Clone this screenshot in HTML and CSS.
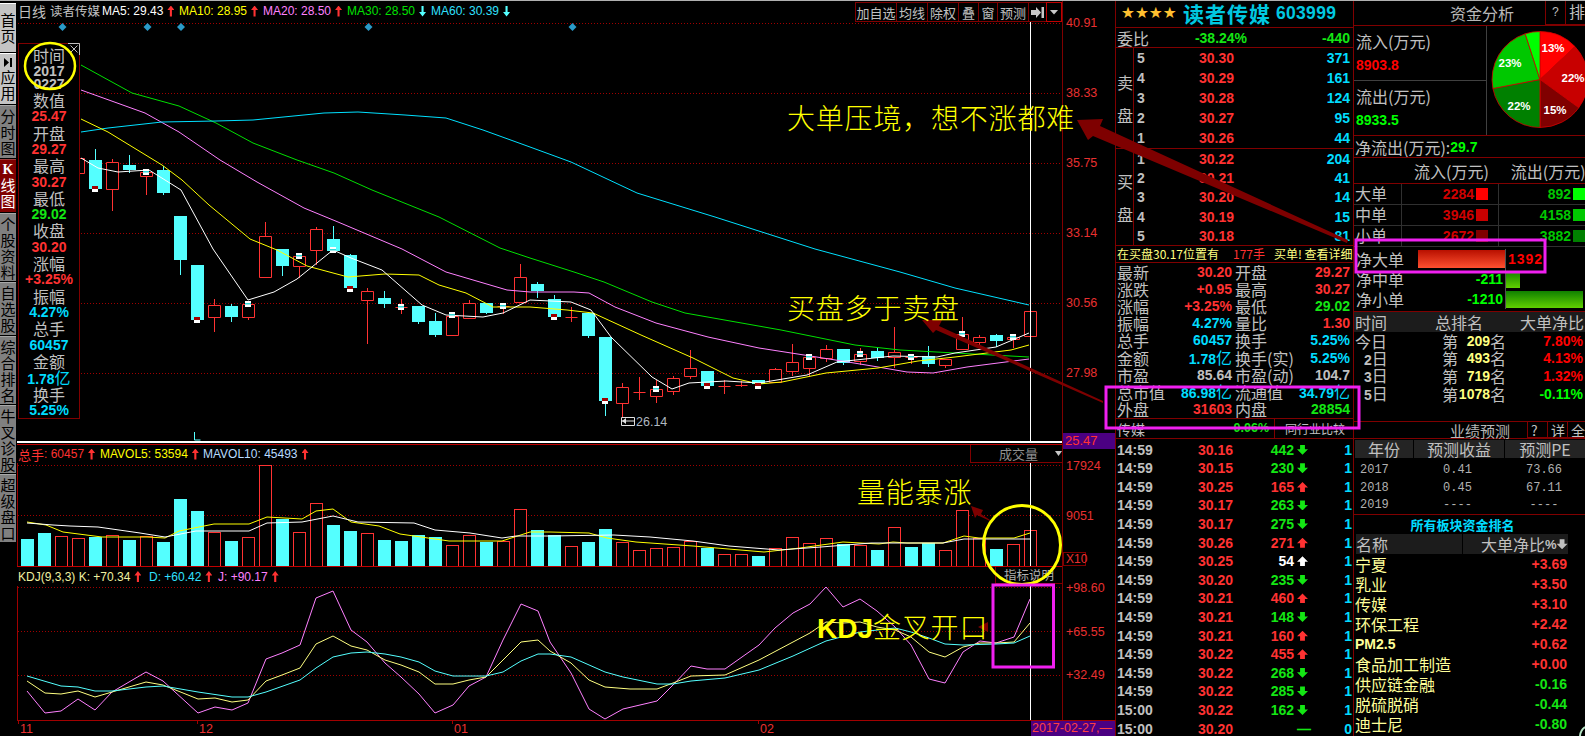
FILE: index.html
```html
<!DOCTYPE html>
<html lang="zh">
<head>
<meta charset="utf-8">
<title>读者传媒 603999</title>
<link rel="stylesheet" href="styles.css">
</head>
<body>
<div class="screen">
  <nav class="tabs">
    <a class="tab h48 light"><span>首页</span></a>
    <a class="tab h50 light"><span><svg class="tab-icon" width="10" height="9" viewBox="0 0 10 9"><path d="M1 0l5 4.500-5 4.500zM7 0h2v9H7z"/></svg>应用</span></a>
    <a class="tab h53"><span>分时图</span></a>
    <a class="tab h53 active"><span><b>K</b>线图</span></a>
    <a class="tab h68"><span>个股资料</span></a>
    <a class="tab h53"><span>自选股</span></a>
    <a class="tab h68"><span>综合排名</span></a>
    <a class="tab h68"><span>牛叉诊股</span></a>
    <a class="tab h68"><span>超级盘口</span></a>
  </nav>

  <main class="chart">
    <section class="pane pane-price">
      <div class="plot">
        <header class="legend-row">
          <span class="gray lg-first">日线</span>
          <span class="gray lg-name">读者传媒</span>
          <span class="lg w77 white">MA5: 29.43<i class="arr up red-bg"></i></span>
          <span class="lg w84 yellow">MA10: 28.95<i class="arr up red-bg"></i></span>
          <span class="lg w84 pink">MA20: 28.50<i class="arr up red-bg"></i></span>
          <span class="lg w84 green-ma">MA30: 28.50<i class="arr down cyan-bg"></i></span>
          <span class="lg w84 cyan-ma">MA60: 30.39<i class="arr down cyan-bg"></i></span>
          <div class="toolbar">
            <button class="w41">加自选</button><button class="w31">均线</button><button class="w31">除权</button><button class="w20">叠</button><button class="w19">窗</button><button class="w31">预测</button><button class="w18"><svg width="13" height="11" viewBox="0 0 13 11"><path d="M0 3h5V0l5 5.500-5 5.500V8H0zM10.500 0H13v11h-2.500z" fill="#c8c8c8"/></svg></button><button class="w15 bright"><i class="caret"></i></button>
          </div>
        </header>
        <svg id="price" class="plot-svg" width="1045" height="419" viewBox="17 22 1045 419"></svg>
        <aside class="infobox">
          <svg class="infobox-x" width="12" height="12" viewBox="0 0 12 12"><path d="M0 .5h11.500V12M2.500 2.500l7 7M9.500 2.500l-7 7" fill="none" stroke="#c0c0c0"/></svg>
          <div class="gray">时间</div><div class="gray nb">2017</div><div class="gray nb tight">0227</div>
          <div class="gray">数值</div><div class="red nb">25.47</div>
          <div class="gray">开盘</div><div class="red nb">29.27</div>
          <div class="gray">最高</div><div class="red nb">30.27</div>
          <div class="gray">最低</div><div class="green nb">29.02</div>
          <div class="gray">收盘</div><div class="red nb">30.20</div>
          <div class="gray">涨幅</div><div class="red nb">+3.25%</div>
          <div class="gray">振幅</div><div class="cyan nb">4.27%</div>
          <div class="gray">总手</div><div class="cyan nb">60457</div>
          <div class="gray">金额</div><div class="cyan nb">1.78<span class="reg">亿</span></div>
          <div class="gray">换手</div><div class="cyan nb">5.25%</div>
        </aside>
      </div>
      <div class="axis axis-price">
        <div class="tick t70">40.91</div><div class="tick t70">38.33</div><div class="tick t70">35.75</div><div class="tick t70">33.14</div><div class="tick t70">30.56</div><div class="tick t70">27.98</div>
        <div class="tag-price">25.47</div>
      </div>
    </section>

    <section class="pane pane-vol">
      <div class="plot plot-top">
        <header class="legend-row short">
          <span class="lg w82 red"><span class="cjk13">总手</span>: 60457<i class="arr up red-bg"></i></span>
          <span class="lg w104 yellow">MAVOL5: 53594<i class="arr up red-bg"></i></span>
          <span class="lg paleblue">MAVOL10: 45493<i class="arr up red-bg"></i></span>
          <div class="vol-select">成交量<i class="caret"></i></div>
        </header>
        <svg id="vol" class="plot-svg" width="1045" height="103" viewBox="17 463 1045 103"></svg>
      </div>
      <div class="axis axis-vol">
        <div class="tick t50">17924</div><div class="tick t20">9051</div><div class="x10">X10</div>
      </div>
    </section>

    <section class="pane pane-kdj">
      <div class="plot plot-top">
        <header class="legend-row kdj">
          <span class="lg w131 pale">KDJ(9,3,3) K: +70.34<i class="arr up red-bg"></i></span>
          <span class="lg w69 cyan-ma">D: +60.42<i class="arr up red-bg"></i></span>
          <span class="lg pink">J: +90.17<i class="arr up red-bg"></i></span>
          <div class="kdj-note">指标说明</div>
        </header>
        <svg id="kdj" class="plot-svg" width="1045" height="134" viewBox="17 586 1045 134"></svg>
      </div>
      <div class="axis axis-kdj">
        <div class="tick t43">+98.60</div><div class="tick t43">+65.55</div><div class="tick t43">+32.49</div>
      </div>
    </section>

    <footer class="xaxis">
      <svg width="1014" height="15" viewBox="17 721 1014 15">
        <path d="M18.500 721v3M197.500 721v3M452.500 721v3M758.500 721v3" stroke="#a00000"/>
        <text class="xlabel" x="20" y="733">11</text>
        <text class="xlabel" x="199" y="733">12</text>
        <text class="xlabel" x="454" y="733">01</text>
        <text class="xlabel" x="760" y="733">02</text>
      </svg>
      <div class="date-tag">2017-02-27,—</div>
    </footer>
  </main>

  <section class="quote">
    <h1 class="q-title"><span class="stars">★★★★</span><span class="q-name">读者传媒</span><span class="q-code">603999</span></h1>
    <div class="q-ratio"><span class="gray">委比</span><b class="green ratio-mid">-38.24%</b><b class="green">-440</b></div>
    <div class="book">
      <div class="book-side gray"><span>卖</span><span>盘</span></div>
      <div class="book-rows">
        <div class="book-row"><b class="gray">5</b><b class="red">30.30</b><b class="cyan">371</b></div>
        <div class="book-row"><b class="gray">4</b><b class="red">30.29</b><b class="cyan">161</b></div>
        <div class="book-row"><b class="gray">3</b><b class="red">30.28</b><b class="cyan">124</b></div>
        <div class="book-row"><b class="gray">2</b><b class="red">30.27</b><b class="cyan">95</b></div>
        <div class="book-row"><b class="gray">1</b><b class="red">30.26</b><b class="cyan">44</b></div>
      </div>
    </div>
    <div class="book book-buy">
      <div class="book-side gray"><span>买</span><span>盘</span></div>
      <div class="book-rows">
        <div class="book-row"><b class="gray">1</b><b class="red">30.22</b><b class="cyan">204</b></div>
        <div class="book-row"><b class="gray">2</b><b class="red">30.21</b><b class="cyan">41</b></div>
        <div class="book-row"><b class="gray">3</b><b class="red">30.20</b><b class="cyan">14</b></div>
        <div class="book-row"><b class="gray">4</b><b class="red">30.19</b><b class="cyan">15</b></div>
        <div class="book-row"><b class="gray">5</b><b class="red">30.18</b><b class="cyan">81</b></div>
      </div>
    </div>
    <div class="notice"><span class="paley">在买盘30.17位置有</span><span class="red n-hand">177手</span><span class="paley">买单! 查看详细</span></div>
    <div class="stats">
      <div class="stat"><span>最新</span><b class="red">30.20</b></div><div class="stat"><span>开盘</span><b class="red">29.27</b></div>
      <div class="stat"><span>涨跌</span><b class="red">+0.95</b></div><div class="stat"><span>最高</span><b class="red">30.27</b></div>
      <div class="stat"><span>涨幅</span><b class="red">+3.25%</b></div><div class="stat"><span>最低</span><b class="green">29.02</b></div>
      <div class="stat"><span>振幅</span><b class="cyan">4.27%</b></div><div class="stat"><span>量比</span><b class="red">1.30</b></div>
      <div class="stat"><span>总手</span><b class="cyan">60457</b></div><div class="stat"><span>换手</span><b class="cyan">5.25%</b></div>
      <div class="stat"><span>金额</span><b class="cyan">1.78<span class="reg">亿</span></b></div><div class="stat"><span>换手(实)</span><b class="cyan">5.25%</b></div>
      <div class="stat"><span>市盈</span><b class="gray">85.64</b></div><div class="stat"><span>市盈(动)</span><b class="gray">104.7</b></div>
      <div class="stat"><span>总市值</span><b class="cyan">86.98<span class="reg">亿</span></b></div><div class="stat"><span>流通值</span><b class="cyan">34.79<span class="reg">亿</span></b></div>
      <div class="stat"><span>外盘</span><b class="red">31603</b></div><div class="stat"><span>内盘</span><b class="green">28854</b></div>
    </div>
    <div class="peer"><span class="gray peer-name">传媒</span><b class="green peer-pct">0.06%</b><span class="gray peer-link">同行业比较</span></div>
    <div class="ticks">
      <div class="tk"><b class="gray">14:59</b><b class="red">30.16</b><b class="green">442</b><i class="ta ta-d green-bg"></i><b class="cyan">1</b></div>
      <div class="tk"><b class="gray">14:59</b><b class="red">30.15</b><b class="green">230</b><i class="ta ta-d green-bg"></i><b class="cyan">1</b></div>
      <div class="tk"><b class="gray">14:59</b><b class="red">30.25</b><b class="red">165</b><i class="ta ta-u red-bg"></i><b class="cyan">1</b></div>
      <div class="tk"><b class="gray">14:59</b><b class="red">30.17</b><b class="green">263</b><i class="ta ta-d green-bg"></i><b class="cyan">1</b></div>
      <div class="tk"><b class="gray">14:59</b><b class="red">30.17</b><b class="green">275</b><i class="ta ta-d green-bg"></i><b class="cyan">1</b></div>
      <div class="tk"><b class="gray">14:59</b><b class="red">30.26</b><b class="red">271</b><i class="ta ta-u red-bg"></i><b class="cyan">1</b></div>
      <div class="tk"><b class="gray">14:59</b><b class="red">30.25</b><b class="white">54</b><i class="ta ta-u white-bg"></i><b class="cyan">1</b></div>
      <div class="tk"><b class="gray">14:59</b><b class="red">30.20</b><b class="green">235</b><i class="ta ta-d green-bg"></i><b class="cyan">1</b></div>
      <div class="tk"><b class="gray">14:59</b><b class="red">30.21</b><b class="red">460</b><i class="ta ta-u red-bg"></i><b class="cyan">1</b></div>
      <div class="tk"><b class="gray">14:59</b><b class="red">30.21</b><b class="green">148</b><i class="ta ta-d green-bg"></i><b class="cyan">1</b></div>
      <div class="tk"><b class="gray">14:59</b><b class="red">30.21</b><b class="red">160</b><i class="ta ta-u red-bg"></i><b class="cyan">1</b></div>
      <div class="tk"><b class="gray">14:59</b><b class="red">30.22</b><b class="red">455</b><i class="ta ta-u red-bg"></i><b class="cyan">1</b></div>
      <div class="tk"><b class="gray">14:59</b><b class="red">30.22</b><b class="green">268</b><i class="ta ta-d green-bg"></i><b class="cyan">1</b></div>
      <div class="tk"><b class="gray">14:59</b><b class="red">30.22</b><b class="green">285</b><i class="ta ta-d green-bg"></i><b class="cyan">1</b></div>
      <div class="tk"><b class="gray">15:00</b><b class="red">30.22</b><b class="green">162</b><i class="ta ta-d green-bg"></i><b class="cyan">1</b></div>
      <div class="tk"><b class="gray">15:00</b><b class="red">30.20</b><b class="green"></b><b class="green ta-dash">—</b><b class="cyan">0</b></div>
    </div>
  </section>

  <aside class="funds">
    <header class="f-head"><span class="f-title">资金分析</span><span class="f-btn w20b">?</span><span class="f-btn">排名</span></header>
    <div class="f-summary">
      <div class="f-flows">
        <div class="f-flow"><div class="gray">流入(万元)</div><b class="pure-red">8903.8</b></div>
        <div class="f-flow"><div class="gray">流出(万元)</div><b class="pure-green">8933.5</b></div>
      </div>
      <svg class="pie" width="98" height="109" viewBox="-53 -53.500 98 109">
        <g stroke="#d00000" stroke-width=".8">
          <path fill="#ff0000" d="M0 0V-48A48 48 0 0 1 35-32.900z"/>
          <path fill="#c80000" d="M0 0L35-32.900A48 48 0 0 1 38.800 28.200z"/>
          <path fill="#800000" d="M0 0L38.800 28.200A48 48 0 0 1 0 48z"/>
          <path fill="#008000" d="M0 0V48A48 48 0 0 1-47.100 9z"/>
          <path fill="#00c800" d="M0 0L-47.100 9A48 48 0 0 1-14.800-45.700z"/>
          <path fill="#00ff00" d="M0 0L-14.800-45.700A48 48 0 0 1 0-48z"/>
        </g>
        <text class="pie-t" x="13" y="-28">13%</text>
        <text class="pie-t" x="33" y="2">22%</text>
        <text class="pie-t" x="15" y="34">15%</text>
        <text class="pie-t" x="-21" y="30">22%</text>
        <text class="pie-t" x="-30" y="-13">23%</text>
      </svg>
    </div>
    <div class="f-net"><span class="gray">净流出(万元):</span><b class="pure-green">29.7</b></div>
    <div class="f-cols gray"><span>流入(万元)</span><span>流出(万元)</span></div>
    <div class="f-row"><span class="gray">大单</span><div class="f-cell"><b class="dred">2284</b><i class="sq s1"></i></div><div class="f-cell"><b class="dgreen">892</b><i class="sq s4"></i></div></div>
    <div class="f-row"><span class="gray">中单</span><div class="f-cell"><b class="dred">3946</b><i class="sq s2"></i></div><div class="f-cell"><b class="dgreen">4158</b><i class="sq s5"></i></div></div>
    <div class="f-row"><span class="gray">小单</span><div class="f-cell"><b class="dred">2672</b><i class="sq s3"></i></div><div class="f-cell"><b class="dgreen">3882</b><i class="sq s6"></i></div></div>
    <div class="net-list">
      <div class="net-row"><div class="net-l"><span class="gray">净大单</span><i class="bar bar-red big-red"></i></div><div class="net-r"><b class="pure-red n-val">1392</b></div></div>
      <div class="net-row"><div class="net-l"><span class="gray">净中单</span><b class="pure-green">-211</b></div><div class="net-r"><i class="bar bar-green w14"></i></div></div>
      <div class="net-row"><div class="net-l"><span class="gray">净小单</span><b class="pure-green">-1210</b></div><div class="net-r"><i class="bar bar-green wb77"></i></div></div>
    </div>
    <div class="rank-head gray"><span>时间</span><span class="rh-2">总排名</span><span class="rh-3">大单净比</span></div>
    <div class="rank-row"><span class="gray">今日</span><span class="gray">第</span><b class="paley">209</b><span class="gray">名</span><b class="pure-red">7.80%</b></div>
    <div class="rank-row"><span class="gray ind"><b>2</b>日</span><span class="gray">第</span><b class="paley">493</b><span class="gray">名</span><b class="pure-red">4.13%</b></div>
    <div class="rank-row"><span class="gray ind"><b>3</b>日</span><span class="gray">第</span><b class="paley">719</b><span class="gray">名</span><b class="pure-red">1.32%</b></div>
    <div class="rank-row"><span class="gray ind"><b>5</b>日</span><span class="gray">第</span><b class="paley">1078</b><span class="gray">名</span><b class="pure-green">-0.11%</b></div>
    <header class="f-head2"><span class="f-title2">业绩预测</span><span class="f-btn b20">?</span><span class="f-btn b20">详</span><span class="f-btn">全部</span></header>
    <div class="fc-head gray"><span>年份</span><span>预测收益</span><span>预测PE</span></div>
    <div class="fc-row"><span>2017</span><span>0.41</span><span>73.66</span></div>
    <div class="fc-row"><span>2018</span><span>0.45</span><span>67.11</span></div>
    <div class="fc-row"><span>2019</span><span>----</span><span>----</span></div>
    <h2 class="board-title">所有板块资金排名</h2>
    <div class="board-head gray"><span>名称</span><span class="bh-2">大单净比<b>%</b><i class="ta ta-d gray-bg"></i></span></div>
    <div class="bd"><span>宁夏</span><b class="red">+3.69</b></div>
    <div class="bd"><span>乳业</span><b class="red">+3.50</b></div>
    <div class="bd"><span>传媒</span><b class="red">+3.10</b></div>
    <div class="bd"><span>环保工程</span><b class="red">+2.42</b></div>
    <div class="bd"><span class="bold-name">PM2.5</span><b class="red">+0.62</b></div>
    <div class="bd"><span>食品加工制造</span><b class="red">+0.00</b></div>
    <div class="bd"><span>供应链金融</span><b class="green">-0.16</b></div>
    <div class="bd"><span>脱硫脱硝</span><b class="green">-0.44</b></div>
    <div class="bd"><span>迪士尼</span><b class="green">-0.80</b></div>
  </aside>

  <div class="notes">
    <svg class="notes-svg" width="1585" height="736" viewBox="0 0 1585 736">
      <g fill="#7e0000">
        <polygon points="1077,120 1103,119 1100,126 1348,240 1347,243 1093,136 1088,140"/>
        <polygon points="922,320 942,320 939,326 1103,401 1103,403 936,330 933,333"/>
        <polygon points="971,506 983,510 981,514 990,520 990,521 977,515 975,518"/>
        <polygon points="978,627 988,622 988,632"/>
      </g>
      <g fill="none">
        <ellipse cx="50" cy="66" rx="25" ry="23" stroke="#ffff00" stroke-width="2.500"/>
        <ellipse cx="1022" cy="545" rx="38.500" ry="39.500" stroke="#ffff00" stroke-width="3"/>
        <g stroke="#f020f0" stroke-width="3">
          <rect x="1106" y="387" width="253" height="41"/>
          <rect x="1356" y="240" width="189" height="32"/>
          <rect x="993" y="585" width="60.500" height="82"/>
        </g>
        <path d="M1585 727a12 12 0 0 0-5 9" stroke="#b8e8c8" stroke-width="2"/>
      </g>
    </svg>
    <div class="note n1">大单压境，想不涨都难</div>
    <div class="note n2">买盘多于卖盘</div>
    <div class="note n3">量能暴涨</div>
    <div class="note n4"><span class="n4-lat">KDJ</span>金叉开口</div>
  </div>
</div>
<script src="chart.js"></script>
</body>
</html>
```
FILE: styles.css
```css
* { box-sizing: border-box; }
html, body { margin: 0; padding: 0; background: #000; }
body { width: 1585px; height: 736px; overflow: hidden; font: 16px/1 "Noto Sans CJK SC", "Liberation Sans", sans-serif; color: #c0c0c0; }
b { font: bold 14px/1 "Liberation Sans", "Noto Sans CJK SC", sans-serif; }
i { display: block; font-style: normal; }
button { margin: 0; padding: 0; background: transparent; font: inherit; color: inherit; }

.screen { position: relative; display: flex; width: 1585px; height: 736px; background: #000; overflow: hidden; }
.screen::before { content: ""; position: absolute; left: 0; right: 0; top: 0; height: 1px; background: #b0b0b0; z-index: 3; }

.gray { color: #c0c0c0; }
.red { color: #ff3232; }
.green { color: #14e614; }
.cyan { color: #00dcff; }
.white { color: #fff; }
.yellow { color: #ffff00; }
.pink { color: #ff80ff; }
.paley { color: #ffff80; }
.pale { color: #f0f0a0; }
.paleblue { color: #b8dcff; }
.green-ma { color: #00e000; }
.cyan-ma { color: #30e0ff; }
.pure-red { color: #ff0000; }
.pure-green { color: #00ff00; }
.dred { color: #d00000; }
.dgreen { color: #00c800; }
.red-bg { background: #ff3232; }
.green-bg { background: #14e614; }
.white-bg { background: #fff; }
.cyan-bg { background: #54ffff; }
.gray-bg { background: #c0c0c0; }
.reg { font: 16px/1 "Noto Sans CJK SC", sans-serif; }

/* left tabs */
.tabs { flex: 0 0 17px; width: 17px; display: flex; flex-direction: column; gap: 1px; padding: 3px 1px 0 0; }
.tab { display: flex; align-items: center; justify-content: center; width: 16px; background: #808080; color: #000; font-size: 15px; line-height: 16px; border-top: 1px solid #a8a8a8; overflow: hidden; }
.tab > span { display: block; width: 15px; text-align: center; }
.tab.light { background: #c4c4c4; border-top-color: #fff; }
.tab.active { background: #800000; color: #fff; border-top-color: #a04040; }
.tab b { display: block; font: bold 14px/14px "Liberation Serif", serif; }
.tab-icon { display: block; margin: 0 auto 2px; }
.h48 { height: 49px; } .h50 { height: 51px; } .h53 { height: 53px; } .h68 { height: 68px; }

/* chart column */
.chart { flex: 0 0 1098px; display: flex; flex-direction: column; }
.pane { display: flex; }
.pane-price { height: 444px; }
.pane-vol { height: 122px; }
.pane-kdj { height: 154px; }
.plot { position: relative; flex: 0 0 1045px; }
.pane-price .plot { height: 441px; }
.plot-svg { display: block; }
.plot-top { border-top: 1px solid #c00000; }
.pane-price .plot::after { content: ""; position: absolute; left: 0; right: 0; top: 441px; height: 2px; background: #fff; }

.legend-row { display: flex; align-items: center; height: 22px; padding-left: 1px; font: 12px/1 "Liberation Sans", "Noto Sans CJK SC", sans-serif; white-space: nowrap; }
.legend-row.short { height: 18px; }
.legend-row.kdj { height: 19px; }
.lg-first { font-size: 14px; width: 32px; font-family: "Noto Sans CJK SC", sans-serif; }
.lg-name { font-size: 12.500px; width: 52px; font-family: "Noto Sans CJK SC", sans-serif; }
.lg { display: flex; align-items: center; flex: none; }
.w77 { width: 77px; } .w84 { width: 84px; } .w82 { width: 82px; } .w104 { width: 103px; } .w131 { width: 131px; } .w69 { width: 69px; }
.cjk13 { font: 13px/1 "Noto Sans CJK SC", sans-serif; }
.arr { width: 7px; height: 11px; margin-left: 4px; flex: none; }
.arr.up { clip-path: polygon(50% 0, 100% 40%, 65% 40%, 65% 100%, 35% 100%, 35% 40%, 0 40%); }
.arr.down { clip-path: polygon(35% 0, 65% 0, 65% 60%, 100% 60%, 50% 100%, 0 60%, 35% 60%); }

.toolbar { position: absolute; right: 0; top: 2px; display: flex; height: 20px; font: 13px/1 "Noto Sans CJK SC", sans-serif; color: #c0c0c0; }
.toolbar button { display: flex; align-items: center; justify-content: center; height: 20px; border: 1px solid #800000; margin-left: -1px; white-space: nowrap; overflow: hidden; }
.toolbar .bright { border-color: #c00000; }
.w41 { width: 42px; } .w31 { width: 32px; } .w20 { width: 21px; } .w19 { width: 20px; } .w18 { width: 19px; } .w15 { width: 16px; }
.caret { width: 9px; height: 5px; background: #c8c8c8; clip-path: polygon(0 0, 100% 0, 50% 100%); }

.infobox { position: absolute; left: 1px; top: 43px; width: 62px; height: 376px; padding-top: 3px; background: #000; border: 1px solid #800000; text-align: center; font-size: 16px; }
.infobox > div { height: 16.320px; line-height: 16.320px; white-space: nowrap; }
.infobox .nb { font: bold 14px/16.320px "Liberation Sans", sans-serif; }
.infobox .tight { margin-top: -4px; }
.infobox-x { position: absolute; right: -1px; top: -1px; }

.axis { position: relative; flex: 0 0 53px; border-left: 1px solid #800000; padding-left: 3px; font: 12.500px/20px "Liberation Sans", sans-serif; color: #e83030; }
.axis-price { padding-top: 13px; }
.axis-vol { padding-top: 12px; }
.axis-kdj { padding-top: 12px; }
.tick { height: 20px; }
.t70 { height: 70px; } .t50 { height: 50px; } .t20 { height: 20px; } .t43 { height: 43.500px; }
.tag-price { position: absolute; left: 0; top: 433px; width: 52px; height: 16px; padding-left: 2px; background: #4b0082; color: #ff3232; font-size: 13px; line-height: 16px; }
.x10 { width: 23px; height: 14px; margin: 26px 0 0 -3px; padding-left: 2px; border: 1px solid #800000; line-height: 13px; font-size: 12px; }
.vol-select { position: absolute; right: 0; top: 0; display: flex; align-items: center; width: 92px; height: 18px; padding-left: 28px; border-left: 1px solid #800000; border-bottom: 1px solid #800000; font: 13px/1 "Noto Sans CJK SC", sans-serif; color: #909090; }
.vol-select .caret { margin-left: 17px; }
.kdj-note { position: absolute; right: 0; top: 0; width: 67px; height: 17px; padding-left: 8px; border-left: 1px solid #800000; border-bottom: 1px solid #800000; font: 12.500px/15px "Noto Sans CJK SC", sans-serif; color: #b0b0b0; }

.xaxis { display: flex; height: 16px; border-top: 1px solid #a00000; }
.xlabel { font: 12.500px "Liberation Sans", sans-serif; fill: #e83030; }
.date-tag { flex: 0 0 84px; height: 15px; padding-left: 1px; background: #4b0082; color: #ff4040; font: 12.500px/15px "Liberation Sans", sans-serif; white-space: nowrap; overflow: hidden; }

/* quote column */
.quote { flex: 0 0 238px; height: 736px; border-left: 1px solid #800000; overflow: hidden; }
.q-title { display: flex; align-items: center; height: 27px; margin: 0; padding-left: 5px; font-weight: normal; white-space: nowrap; }
.stars { font: 15.500px/1 "DejaVu Sans", sans-serif; color: #ffc030; width: 62px; }
.q-name { font: bold 21px/1 "Noto Sans CJK SC", sans-serif; letter-spacing: 1px; color: #00c8e0; width: 93px; }
.q-code { font: bold 17.500px/1 "Liberation Sans", sans-serif; letter-spacing: .3px; color: #00c8e0; }
.q-ratio { display: grid; grid-template-columns: 58px 92px 1fr; align-items: center; height: 21px; padding: 0 3px 0 1px; border-top: 1px solid #800000; border-bottom: 1px solid #800000; }
.q-ratio b:last-child { text-align: right; }
.ratio-mid { text-align: center; }
.book { display: flex; height: 100px; }
.book-buy { height: 97px; border-top: 1px solid #800000; }
.book-side { flex: 0 0 17px; display: flex; flex-direction: column; justify-content: center; gap: 17px; padding-left: 1px; border-right: 1px solid #800000; }
.book-rows { flex: 1; padding-left: 3px; }
.book-row { display: grid; grid-template-columns: 13px 84px 1fr; align-items: center; height: 20px; padding-right: 3px; }
.book-buy .book-row { height: 19.300px; }
.book-row b { text-align: right; }
.book-row b:first-child { text-align: left; }
.notice { display: flex; align-items: center; height: 18px; padding-left: 1px; border-top: 1px solid #800000; border-bottom: 1px solid #800000; font-size: 12px; white-space: nowrap; }
.n-hand { margin: 0 9px 0 14px; }
.stats { display: grid; grid-template-columns: 115px 115px; column-gap: 3px; grid-auto-rows: 17.200px; padding-left: 1px; height: 155px; }
.stat { display: flex; justify-content: space-between; align-items: center; white-space: nowrap; }
.peer { display: grid; grid-template-columns: 50px 102px 1fr; align-items: center; height: 21px; padding-left: 1px; border-top: 1px solid #800000; border-bottom: 1px solid #800000; font-size: 14px; }
.peer-pct { text-align: right; font-size: 12.500px; }
.peer-link { height: 19px; margin-left: 5px; padding-left: 10px; line-height: 20px; border-left: 1px solid #800000; white-space: nowrap; font-size: 12px; }
.ticks { padding-top: 1.400px; }
.tk { display: grid; grid-template-columns: 40px 76px 61px 16px 1fr; align-items: center; height: 18.600px; padding: 0 1px 0 1px; }
.tk b { text-align: right; }
.tk b:first-child { text-align: left; }
.ta { width: 11px; height: 10px; margin-left: 3px; }
.ta-u { clip-path: polygon(50% 0, 100% 55%, 72% 55%, 72% 100%, 28% 100%, 28% 55%, 0 55%); }
.ta-d { clip-path: polygon(28% 0, 72% 0, 72% 45%, 100% 45%, 50% 100%, 0 45%, 28% 45%); }
.tk .ta-dash { text-align: left; padding-left: 3px; }

/* funds column */
.funds { flex: 0 0 232px; height: 736px; border-left: 1px solid #800000; overflow: hidden; }
.f-head { display: flex; height: 26px; padding-top: 1px; border-bottom: 1px solid #800000; }
.f-title { width: 191px; padding: 4px 0 0 96px; font-size: 16px; white-space: nowrap; color: #b8b8b8; }
.f-btn { display: block; height: 100%; padding: 2px 0 0 3px; border-left: 1px solid #800000; border-bottom: 1px solid #800000; white-space: nowrap; overflow: hidden; flex: 1; }
.f-head .w20b { flex: 0 0 20px; font: 12px/20px "Liberation Mono", monospace; padding-left: 6px; }
.f-summary { display: flex; height: 110px; border-bottom: 1px solid #800000; }
.f-flows { flex: 0 0 133px; border-right: 1px solid #404040; }
.f-flow { height: 54.500px; padding: 7px 0 0 2px; }
.f-flow:first-child { border-bottom: 1px solid #404040; }
.f-flow b { display: block; margin-top: 9px; }
.pie { display: block; }
.pie-t { font: bold 11.500px "Liberation Sans", sans-serif; fill: #fff; text-anchor: middle; }
.f-net { display: flex; align-items: center; height: 22px; padding-left: 1px; border-bottom: 1px solid #800000; white-space: nowrap; }
.f-cols { display: flex; height: 26px; padding: 5px 0 0 60px; gap: 22px; border-bottom: 1px solid #800000; white-space: nowrap; }
.f-row { display: grid; grid-template-columns: 48px 97px 1fr; height: 21px; border-bottom: 1px solid #303030; white-space: nowrap; }
.f-row > span { padding-left: 1px; line-height: 18px; border-right: 1px solid #303030; }
.f-cell { display: flex; align-items: center; justify-content: flex-end; padding-right: 10px; border-right: 1px solid #303030; }
.f-cell:last-child { border-right: 0; padding-right: 0; }
.sq { width: 12px; height: 12px; margin-left: 2px; }
.s1 { background: #ff0000; } .s2 { background: #c80000; } .s3 { background: #800000; }
.s4 { background: #00ff00; } .s5 { background: #00c800; } .s6 { background: #008000; }
.net-list { padding-top: 2px; height: 65px; border-bottom: 1px solid #800000; }
.net-row { display: grid; grid-template-columns: 151px 1fr; height: 20px; }
.net-l { display: flex; align-items: center; justify-content: space-between; padding: 0 2px; white-space: nowrap; }
.net-r { display: flex; align-items: center; border-left: 1px solid #505050; }
.bar { height: 17px; }
.bar-red { background: linear-gradient(#b81000, #ff5030); }
.big-red { width: 87px; height: 18px; margin-right: -2px; }
.bar-green { background: linear-gradient(#108000, #60d000); }
.w14 { width: 14px; } .wb77 { width: 77px; }
.n-val { margin-left: 2px; letter-spacing: 1px; }
.rank-head { display: flex; align-items: center; height: 20px; background: #1c1c1c; padding-left: 1px; white-space: nowrap; }
.rh-2 { margin-left: 48px; }
.rh-3 { margin-left: auto; padding-right: 1px; }
.rank-row { display: grid; grid-template-columns: 87px 16px 32px 16px 1fr; align-items: center; height: 17.600px; white-space: nowrap; padding-left: 1px; }
.rank-row > b:nth-child(3) { text-align: right; }
.rank-row > b:last-child { text-align: right; padding-right: 2px; }
.ind { padding-left: 9px; }
.f-head2 { display: flex; height: 18px; margin-top: 19px; border-top: 1px solid #800000; border-bottom: 1px solid #800000; font-size: 14px; }
.f-title2 { width: 173px; padding: 1px 0 0 96px; white-space: nowrap; font-size: 15px; color: #b8b8b8; }
.b20 { flex: 0 0 20px; font-size: 14px; }
.f-head2 .f-btn { padding-top: 1px; }
.fc-head { display: grid; grid-template-columns: 58px 90px 1fr; gap: 1px; height: 18px; margin: 1px 0 4px; padding-left: 1px; text-align: center; line-height: 18px; }
.fc-head span { background: #242424; white-space: nowrap; }
.fc-row { display: grid; grid-template-columns: 58px 91px 1fr; height: 17.300px; font: 12px/17px "Liberation Mono", monospace; color: #b0b0b0; text-align: center; }
.fc-row span:first-child { text-align: left; padding-left: 6px; }
.board-title { height: 18px; margin: 0; padding: 1px 14px 0 0; border-top: 1px solid #800000; font: bold 13px/17px "Noto Sans CJK SC", sans-serif; color: #00dcff; text-align: center; box-sizing: content-box; }
.board-head { display: grid; grid-template-columns: 106px 105px; gap: 1px; height: 20px; margin-left: 2px; line-height: 20px; }
.board-head span { background: #1c1c1c; white-space: nowrap; }
.bh-2 { display: flex; align-items: center; padding-left: 18px; }
.bh-2 b { font-size: 13px; }
.bh-2 .ta { margin-left: 0; }
.bd { display: flex; justify-content: space-between; align-items: center; height: 20px; width: 213px; padding-left: 1px; color: #ffff99; white-space: nowrap; }
.bold-name { font: bold 14px "Liberation Sans", sans-serif; }

/* hand-drawn annotations */
.notes { position: absolute; inset: 0; z-index: 5; pointer-events: none; }
.notes-svg { position: absolute; left: 0; top: 0; }
.note { position: absolute; font: 300 28px/1 "Noto Sans CJK SC", sans-serif; letter-spacing: .8px; color: #ffff00; white-space: nowrap; }
.n1 { left: 787px; top: 103px; }
.n2 { left: 787px; top: 293px; }
.n3 { left: 857px; top: 477px; }
.n4 { left: 817px; top: 612px; }
.n4-lat { font: bold 28px/1 "Liberation Sans", sans-serif; letter-spacing: 0; }
```
FILE: chart.js
```js
const X = i => Math.round(27.4 + 17 * i) + 0.5;
const poly = (pts, color, w) => `<polyline fill="none" stroke="${color}" stroke-width="${w || 1}" points="${pts.map(p => p.join(',')).join(' ')}"/>`;
const dots = ys => ys.map(y => `<path d="M18 ${y}.5H1062" stroke="#a00000" stroke-dasharray="1 2"/>`).join('');
const cross = (a, b) => `<path d="M1030.5 ${a}V${b}" stroke="#fff"/>`;

// [i, bodyTop, bodyBottom, high, low, type, markerType, markerY]
const candles = [
  [3,158,173,158,173,'r'],
  [4,160,189,149,190,'c','d',186],[5,162,189,159,211,'r'],[6,165,170,155,173,'c'],[7,172,176,172,195,'r','w',169],
  [8,170,193,166,195,'c'],[9,216,260,216,275,'c'],[10,265,320,265,320,'c','d',317],[11,305,317,299,332,'r'],
  [12,306,317,304,322,'c'],[13,304,317,302,320,'r','w',301],[14,236,277,222,277,'r'],[15,249,266,249,276,'c'],
  [16,256,266,253,278,'r','w',253],[17,229,250,227,265,'r'],[18,239,251,226,253,'c','w',247],[19,255,288,254,288,'c','d',286],
  [20,291,300,288,344,'r'],[21,298,304,291,308,'c'],[22,307,307,299,314,'r','w',304],[23,306,322,306,324,'c'],
  [24,321,335,313,337,'c'],[25,316,335,316,335,'r','w',312],[26,303,318,300,319,'r'],[27,303,313,303,314,'c'],
  [28,306,306,303,314,'r','w',303],[29,277,302,264,302,'r'],[30,284,291,282,298,'c'],[31,299,317,295,317,'c','d',314],
  [32,317,317,307,322,'r'],[33,313,336,313,338,'c'],[34,337,401,337,416,'c','d',398],[35,387,403,383,418,'r'],
  [36,392,392,377,400,'r'],[37,389,396,380,403,'r','w',386],[38,378,391,376,395,'r'],[39,368,376,350,379,'r'],
  [40,371,386,371,387,'c','d',383],[41,386,386,380,394,'r'],[42,385,385,381,387,'r'],[43,380,384,380,385,'c','d',383],
  [44,369,382,368,383,'r'],[45,362,371,344,376,'r'],[46,357,368,355,377,'r','w',354],[47,349,358,345,362,'r'],
  [48,349,363,349,365,'c'],[49,354,361,348,365,'r','w',351],[50,351,358,347,361,'c'],[51,352,357,327,368,'r'],
  [52,357,357,354,364,'r','w',354],[53,356,364,346,367,'c'],[54,359,365,359,368,'r'],[55,334,349,317,349,'r','w',331],
  [56,337,342,335,345,'r'],[57,335,341,334,347,'c'],[58,337,339,335,348,'r','w',334],[59,311,336,311,345,'r']
];
const ma = {
  '#00e000': [[81,65],[132,93],[179,106],[216,123],[253,143],[297,160],[334,173],[372,190],[439,217],[500,248],[530,258],[574,272],[604,282],[652,302],[685,313],[781,330],[855,345],[900,350],[955,353],[1029,357]],
  '#ff80ff': [[81,90],[145,113],[179,132],[220,160],[257,182],[304,208],[338,222],[402,249],[446,272],[507,290],[530,292],[574,292],[589,293],[615,307],[656,323],[708,337],[759,348],[804,355],[848,362],[878,367],[907,372],[933,373],[967,367],[1029,359]],
  '#00e0ff': [[81,132],[108,128],[162,122],[216,121],[253,120],[324,113],[358,112],[405,115],[446,118],[483,130],[530,147],[571,162],[637,193],[715,217],[815,249],[900,272],[955,288],[1029,305]],
  '#ffff00': [[81,119],[108,132],[162,165],[182,180],[209,205],[250,239],[277,250],[307,266],[348,277],[385,274],[419,275],[439,285],[466,293],[493,307],[530,307],[567,310],[593,313],[641,335],[693,358],[733,378],[759,384],[782,382],[826,373],[878,368],[918,361],[955,357],[1011,350],[1029,345]],
  '#ffffff': [[81,158],[98,168],[118,172],[149,170],[181,190],[213,249],[248,300],[274,292],[297,279],[333,250],[351,258],[382,270],[422,305],[446,315],[483,317],[503,313],[530,300],[571,302],[591,310],[611,337],[652,377],[672,389],[689,383],[726,381],[759,383],[807,375],[837,362],[893,356],[937,357],[955,353],[996,347],[1029,333]]
};
let price = dots([23, 93, 163, 233, 303, 373]);
let cy = '', rd = '', wk = '', mk = '';
for (const [i, t, b, h, l, k, m, my] of candles) {
  const x = X(i), c = k === 'c' ? '#54ffff' : '#ff3232';
  wk += `<path d="M${x} ${h}V${l}" stroke="${c}"/>`;
  if (k === 'c') cy += `M${x - 6.5} ${t}h13v${Math.max(b - t, 1)}h-13z`;
  else if (t === b) rd += `M${x - 6} ${t}.5h12`;
  else rd += `M${x - 6} ${t}.5h12V${b}.5h-12z`;
  if (m === 'w') mk += `<rect x="${x - 3.5}" y="${my}" width="6" height="6" fill="#fff"/><rect x="${x - 3.5}" y="${my + 2}" width="6" height="1.500" fill="#30d8d8"/>`;
  if (m === 'd') mk += `<rect x="${x - 3.5}" y="${my}" width="6" height="3" fill="#a00000"/><rect x="${x - 3.5}" y="${my + 3}" width="6" height="3" fill="#fff"/>`;
}
price += wk + `<path d="${cy}" fill="#54ffff"/><path d="${rd}" fill="#000" stroke="#ff3232"/>`;
// moving averages and marks sit on top of the candle bodies
for (const c in ma) price += poly(ma[c], c);
price += mk + cross(22, 441);
price += '<path d="M194.500 432v8h6" fill="none" stroke="#54ffff"/>';
price += '<path d="M621.500 417.500h13v8h-13zM622 421h12" fill="none" stroke="#e0e0e0"/><path d="M622 421l4-3v6z" fill="#e0e0e0"/>';
price += '<text x="636" y="426" font-family="Liberation Sans" font-size="12.500" fill="#b0b8c0">26.14</text>';
const diamonds = [62.5, 147.5, 181, 368.5, 572.5];
for (const d of diamonds) price += `<path d="M${d} 23l4 4-4 4-4-4z" fill="#2a9ac8"/>`;
document.getElementById('price').innerHTML = price;

// volume
const volTops = [539,533,536,538,537,535,540,536,542,499,511,532,541,537,465,519,532,503,525,531,533,540,541,535,537,545,535,542,541,509,530,535,546,542,529,542,550,548,547,541,548,554,554,556,548,537,543,538,544,545,550,527,547,543,550,510,538,549,544,530];
const cyanBars = [0,1,4,6,8,9,10,12,15,18,19,21,22,23,24,27,30,31,33,34,40,43,48,50,52,53,57];
let vol = dots([465, 515]);
volTops.forEach((top, i) => {
  const x = X(i);
  if (cyanBars.includes(i)) vol += `<rect x="${x - 6.5}" y="${top}" width="13" height="${566 - top}" fill="#54ffff"/>`;
  else vol += `<rect x="${x - 6}" y="${top + .5}" width="12" height="${566 - top}" fill="#000" stroke="#ff3232"/>`;
});
vol += poly([[27,522],[46,525],[63,532],[102,537],[147,537],[165,538],[179,531],[214,524],[249,524],[267,517],[302,519],[316,511],[333,509],[351,522],[379,526],[400,534],[449,541],[502,541],[530,532],[550,532],[589,533],[607,538],[636,542],[693,546],[764,552],[800,548],[843,542],[879,544],[893,542],[907,543],[943,543],[964,536],[979,538],[1014,538],[1030,533]], '#ffff00');
vol += poly([[27,523],[53,525],[70,526],[98,527],[140,533],[165,537],[196,531],[249,531],[267,523],[302,522],[333,516],[358,522],[414,523],[435,530],[470,533],[502,538],[516,536],[550,536],[614,535],[650,537],[693,541],[729,546],[779,550],[821,547],[871,543],[943,543],[964,539],[1030,539]], '#ffffff');
vol += cross(463, 566) + '<path d="M17.500 463V566" stroke="#a00000"/>';
document.getElementById('vol').innerHTML = vol;

// KDJ
const J = [[27,691],[45,713],[61,711],[78,699],[95,710],[112,692],[146,672],[163,681],[198,713],[215,707],[232,710],[248,703],[266,659],[282,653],[300,645],[316,598],[333,591],[351,630],[367,642],[385,663],[401,677],[419,694],[435,713],[453,705],[469,686],[486,677],[503,640],[521,604],[538,611],[550,642],[571,673],[589,709],[605,719],[623,709],[657,701],[673,685],[691,666],[707,669],[725,669],[759,645],[775,628],[793,613],[810,604],[826,587],[843,607],[860,599],[877,611],[895,627],[911,645],[929,679],[945,683],[963,652],[980,641],[996,643],[1014,637],[1030,599]];
const K = [[27,681],[45,693],[61,694],[78,691],[95,697],[112,692],[146,682],[163,685],[198,699],[215,698],[232,702],[248,700],[266,681],[282,675],[300,668],[316,644],[333,636],[351,646],[367,650],[385,660],[401,665],[419,672],[435,684],[453,684],[469,680],[486,677],[503,660],[521,642],[538,640],[550,651],[571,663],[589,680],[605,687],[630,689],[657,689],[673,683],[691,676],[725,675],[759,660],[793,642],[810,633],[826,622],[843,623],[860,622],[877,627],[895,630],[911,637],[929,652],[945,657],[963,647],[980,643],[996,643],[1014,642],[1030,623]];
const D = [[27,676],[61,686],[78,687],[95,691],[112,691],[146,687],[163,686],[198,692],[232,697],[248,697],[266,692],[300,680],[316,668],[333,657],[351,653],[367,652],[385,654],[401,657],[419,662],[435,671],[453,676],[486,676],[503,672],[521,661],[538,654],[550,654],[571,657],[605,672],[623,677],[657,684],[673,684],[691,681],[725,678],[759,670],[793,656],[826,641],[860,632],[895,628],[911,632],[929,638],[945,644],[963,645],[996,644],[1014,643],[1030,636]];
let kdj = dots([587, 631, 675]) + poly(J, '#ff80ff') + poly(K, '#ffff80') + poly(D, '#54ffff');
kdj += cross(586, 720) + '<path d="M17.500 586V720" stroke="#a00000"/>';
document.getElementById('kdj').innerHTML = kdj;
```
